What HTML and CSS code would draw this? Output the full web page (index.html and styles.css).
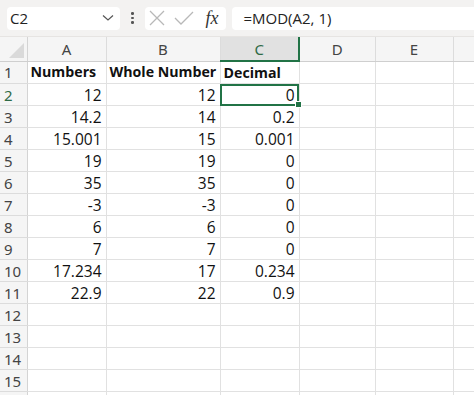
FILE: index.html
```html
<!DOCTYPE html>
<html lang="en">
<head>
  <meta charset="UTF-8" />
  <title>MOD sheet</title>
  <link rel="stylesheet" href="styles.css">
</head>
<body>
  <div class="toolbar">
    <div class="namebox">
      <span>C2</span>
      <svg width="12" height="8" viewBox="0 0 12 8"><polyline points="1,1.5 6,6 11,1.5" fill="none" stroke="#555" stroke-width="1.2"/></svg>
    </div>
    <div class="dots"><i></i><i></i><i></i></div>
    <div class="fxbox">
      <svg width="16" height="16" viewBox="0 0 16 16"><path d="M1 1 L15 15 M15 1 L1 15" stroke="#b8b8b8" stroke-width="1.3" fill="none"/></svg>
      <svg width="20" height="16" viewBox="0 0 20 16"><polyline points="1,8 7,14 19,2" stroke="#b8b8b8" stroke-width="1.3" fill="none"/></svg>
      <span class="fx">fx</span>
    </div>
    <div class="formula">=MOD(A2, 1)</div>
  </div>

  <table class="sheet">
    <colgroup>
      <col class="c-row"><col class="c-a"><col class="c-b"><col class="c-c"><col class="c-d"><col class="c-e"><col>
    </colgroup>
    <tr class="head">
      <th class="corner"><span></span></th><th>A</th><th>B</th><th class="sel">C</th><th>D</th><th>E</th><th></th>
    </tr>
    <tr><th>1</th><td class="lbl">Numbers</td><td class="lbl">Whole Number</td><td class="lbl">Decimal</td><td></td><td></td><td></td></tr>
    <tr><th class="sel">2</th><td>12</td><td>12</td><td class="active">0<span class="handle"></span></td><td></td><td></td><td></td></tr>
    <tr><th>3</th><td>14.2</td><td>14</td><td>0.2</td><td></td><td></td><td></td></tr>
    <tr><th>4</th><td>15.001</td><td>15</td><td>0.001</td><td></td><td></td><td></td></tr>
    <tr><th>5</th><td>19</td><td>19</td><td>0</td><td></td><td></td><td></td></tr>
    <tr><th>6</th><td>35</td><td>35</td><td>0</td><td></td><td></td><td></td></tr>
    <tr><th>7</th><td>-3</td><td>-3</td><td>0</td><td></td><td></td><td></td></tr>
    <tr><th>8</th><td>6</td><td>6</td><td>0</td><td></td><td></td><td></td></tr>
    <tr><th>9</th><td>7</td><td>7</td><td>0</td><td></td><td></td><td></td></tr>
    <tr><th>10</th><td>17.234</td><td>17</td><td>0.234</td><td></td><td></td><td></td></tr>
    <tr><th>11</th><td>22.9</td><td>22</td><td>0.9</td><td></td><td></td><td></td></tr>
    <tr><th>12</th><td></td><td></td><td></td><td></td><td></td><td></td></tr>
    <tr><th>13</th><td></td><td></td><td></td><td></td><td></td><td></td></tr>
    <tr><th>14</th><td></td><td></td><td></td><td></td><td></td><td></td></tr>
    <tr><th>15</th><td></td><td></td><td></td><td></td><td></td><td></td></tr>
    <tr class="last"><th></th><td></td><td></td><td></td><td></td><td></td><td></td></tr>
  </table>
</body>
</html>
```

FILE: styles.css
```css
body {
  margin: 0;
  background: #fff;
  font-family: "Open Sans", "Noto Sans", sans-serif;
  overflow: hidden;
}

.toolbar {
  display: flex;
  align-items: center;
  height: 37px;
  padding: 0 0 0 7px;
  background: #f3f2f1;
  border-bottom: 1px solid #e6e4e2;
  box-sizing: border-box;
}

.namebox {
  width: 113px;
  height: 23px;
  background: #fff;
  border-radius: 4px;
  display: flex;
  align-items: center;
  justify-content: space-between;
  padding: 0 6px 0 3px;
  box-sizing: border-box;
  font-size: 15px;
  color: #222;
}

.dots {
  display: flex;
  flex-direction: column;
  gap: 2px;
  margin: 0 11px 0 11px;
}

.dots i {
  display: block;
  width: 2.5px;
  height: 2.5px;
  background: #555;
  border-radius: 50%;
}

.fxbox {
  width: 81px;
  height: 23px;
  background: #fff;
  border-radius: 4px;
  display: flex;
  align-items: center;
  gap: 9px;
  padding: 0 0 0 4px;
  box-sizing: border-box;
}

.fx {
  font-family: "Liberation Serif", serif;
  font-style: italic;
  font-size: 18px;
  color: #333;
  margin-left: 3px;
}

.formula {
  flex: 1;
  height: 23px;
  margin-left: 6px;
  margin-right: -10px;
  background: #fff;
  border-radius: 4px;
  padding-left: 12px;
  font-size: 15px;
  line-height: 23px;
  color: #222;
}

.sheet {
  border-collapse: collapse;
  table-layout: fixed;
  width: 490px;
}

.c-row { width: 27px; }
.c-a { width: 79px; }
.c-b { width: 114px; }
.c-c { width: 79px; }
.c-d { width: 76px; }
.c-e { width: 78px; }

.sheet th,
.sheet td {
  height: 21px;
  line-height: 18px;
  padding: 0;
  border: 1px solid #e1e1e1;
  border-top: none;
  border-left: none;
  white-space: nowrap;
  overflow: visible;
}

.sheet th {
  background: #f5f5f5;
  color: #444;
  font-weight: normal;
  font-size: 15px;
  font-family: "Noto Sans", sans-serif;
  text-align: center;
  border-color: #dcdcdc;
}

.sheet tr th:first-child {
  text-align: left;
  padding-left: 4px;
  border-right: 1px solid #d4d4d4;
}

.head th {
  height: 23px;
  border-bottom: 1px solid #cfcfcf;
}

.head th.corner {
  position: relative;
  padding: 0;
}

.corner span {
  position: absolute;
  right: 3px;
  bottom: 3px;
  width: 0;
  height: 0;
  border-left: 15px solid transparent;
  border-bottom: 15px solid #dadada;
}

.head th.sel {
  background: #e1e1e1;
  border-bottom: 2px solid #217346;
  color: #2f6a47;
}

.sheet th.sel {
  border-right: 2px solid #217346;
  color: #2f6a47;
}

.sheet td {
  text-align: right;
  padding-right: 4px;
  font-size: 15.5px;
  color: #111;
}

.sheet td.lbl {
  text-align: left;
  padding-left: 3px;
  font-weight: bold;
  font-size: 14.2px;
}

.sheet td.active {
  position: relative;
  outline: 2px solid #217346;
  outline-offset: -2px;
}

.handle {
  position: absolute;
  right: -3px;
  bottom: -3px;
  width: 5px;
  height: 5px;
  background: #217346;
  border: 1px solid #fff;
}
```
